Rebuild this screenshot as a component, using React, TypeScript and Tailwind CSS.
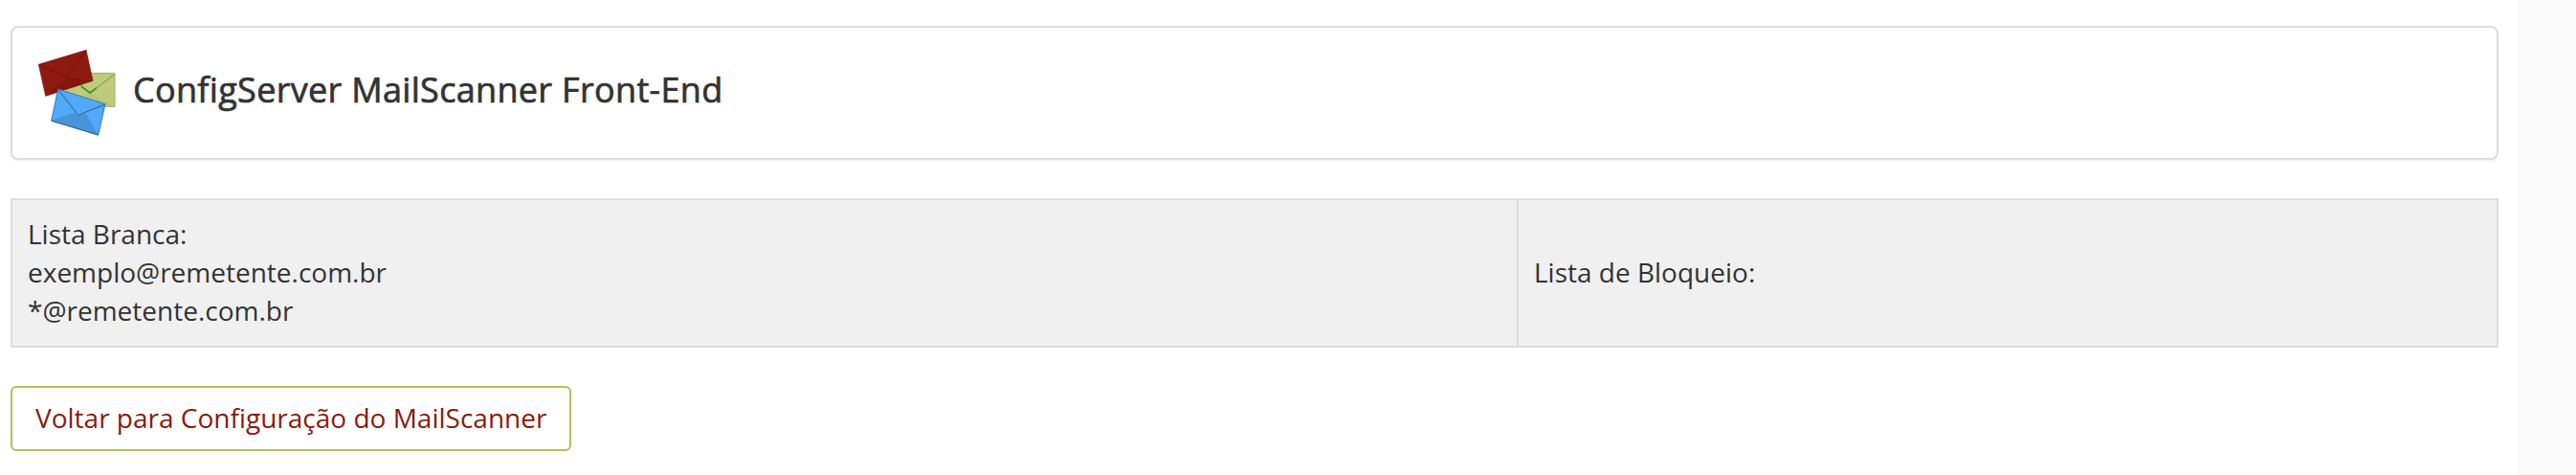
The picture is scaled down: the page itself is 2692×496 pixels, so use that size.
import React from 'react';

const whiteList: string[] = ['exemplo@remetente.com.br', '*@remetente.com.br'];
const blockList: string[] = [];

function EnvelopesIcon() {
  return (
    <svg viewBox="21 30 252 288" className="mt-[2px] h-[96px] w-[84px] shrink-0" strokeLinejoin="round" fill="none">
      {/* green */}
      <path d="M118 109H270V214H118Z" fill="#bdcb7b" stroke="#8fb868" strokeWidth="3" />
      <path d="M118 214L192 172L270 214Z" fill="#b6c577" />
      <path d="M118 110L192 171L268 114" stroke="#62a047" strokeWidth="3" />
      <path d="M164 150L192 171L212 156" stroke="#3f942c" strokeWidth="5" />
      {/* red */}
      <path d="M31 82L180 37L201 133L53 181Z" fill="#8e1a10" stroke="#7c150e" strokeWidth="2" />
      <path d="M53 181L116 122L201 133Z" fill="#83170e" />
      <path d="M32 83L118 121L180 38" stroke="#75130c" strokeWidth="3" />
      {/* blue */}
      <path d="M92 159L240 206L218 303L71 258Z" fill="#52a9f8" stroke="#3978b5" strokeWidth="3" />
      <path d="M71 258L140 233L155 242L180 236L218 303Z" fill="#4994d9" />
      <path d="M93 161L155 241L239 207" stroke="#2b6194" strokeWidth="3" />
      <path d="M71 258L218 303" stroke="#2b6194" strokeWidth="3" />
    </svg>
  );
}

function AddressCell({ title, items }: { title: string; items: string[] }) {
  return (
    <td className="border-2 border-[#dddddd] px-4 pt-[15px] pb-[17px] align-middle">
      <div>{title}</div>
      {items.map((item) => (
        <div key={item}>{item}</div>
      ))}
    </td>
  );
}

export default function App() {
  return (
    <div className="flex h-[496px] w-[2692px] overflow-hidden bg-[#fafafa] font-['Open_Sans',sans-serif] text-[28px] leading-[40px] text-[#333333]">
      <main className="flex w-[2631px] flex-col items-start bg-white pt-[27px] pr-5 pl-[11px]">
        <header className="flex h-[140px] w-full items-center rounded-lg border-2 border-[#dddddd] pl-6 shadow-[0_2px_2px_rgba(0,0,0,0.05)]">
          <EnvelopesIcon />
          <h1 className="ml-[18px] pb-[7px] text-[36px] leading-[40px] font-normal tracking-[0.32px] [-webkit-text-stroke:0.7px_#333333]">
            ConfigServer MailScanner Front-End
          </h1>
        </header>

        <table className="mt-10 h-[156px] w-full table-fixed border-collapse bg-[#f0f0f0]">
          <colgroup>
            <col className="w-[1574px]" />
            <col />
          </colgroup>
          <tbody>
            <tr>
              <AddressCell title="Lista Branca:" items={whiteList} />
              <AddressCell title="Lista de Bloqueio:" items={blockList} />
            </tr>
          </tbody>
        </table>

        <button
          type="button"
          className="mt-10 rounded-md border-2 border-[#abc15c] bg-white px-6 pt-[11px] pb-[13px] whitespace-nowrap text-[#8b1a10]"
        >
          Voltar para Configuração do MailScanner
        </button>
      </main>
    </div>
  );
}
